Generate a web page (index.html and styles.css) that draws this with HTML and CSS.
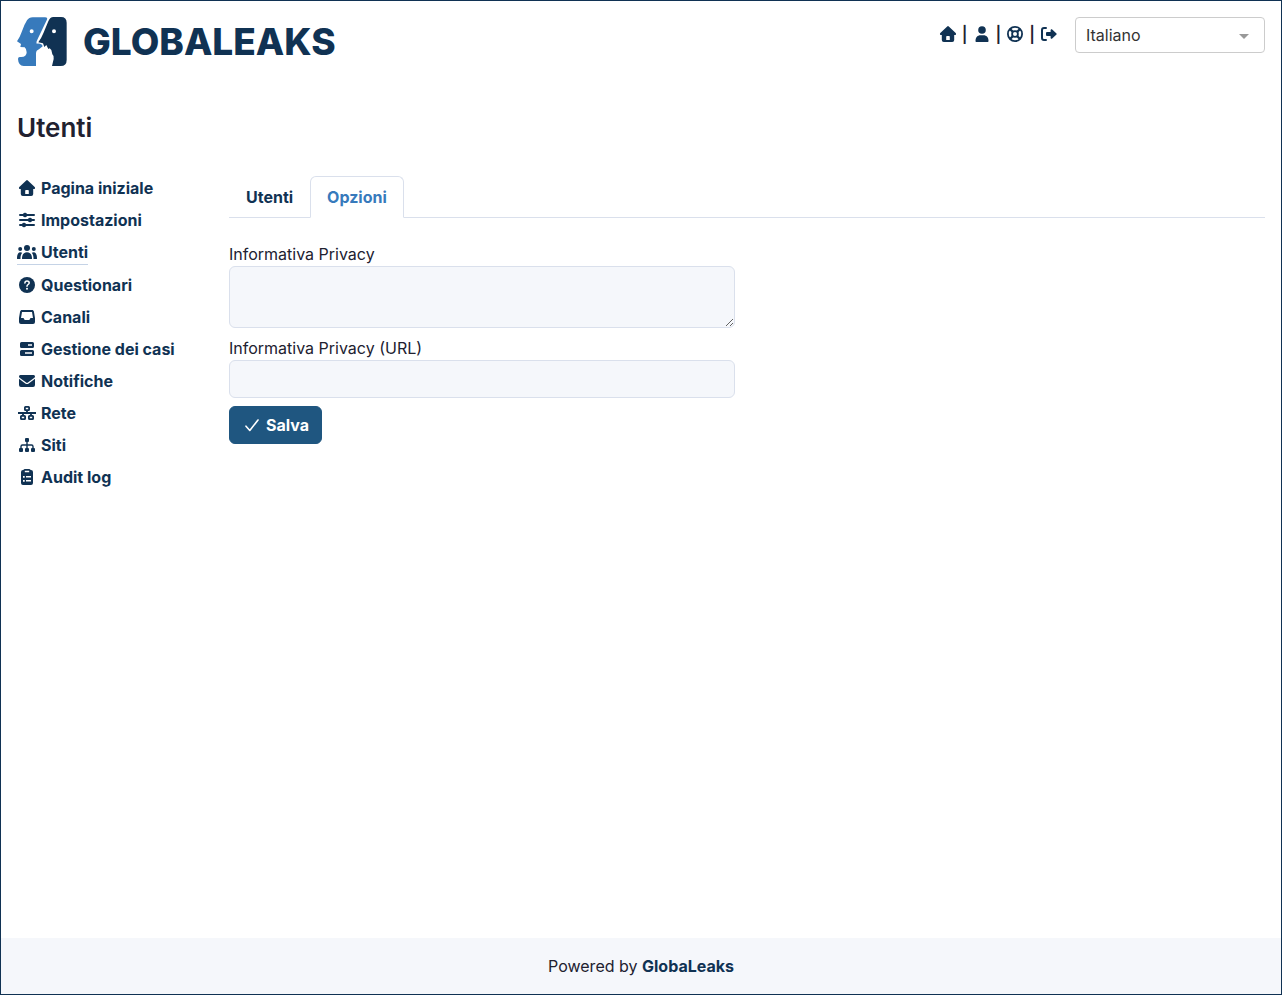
FILE: index.html
```html
<!DOCTYPE html>
<html lang="it">
<head>
    <meta charset="UTF-8">
    <meta name="viewport" content="width=device-width, initial-scale=1.0">
    <title>GlobaLeaks - Utenti</title>
    <link rel="stylesheet" href="styles.css">
</head>
<body>

    <!-- icons -->
    <svg class="sprite" aria-hidden="true">
        <symbol id="i-home" viewBox="0 0 20 16"><path fill-rule="evenodd" d="M9.200.400a1.200 1.200 0 0 1 1.600 0l6.900 6.700c.7.700.3 1.900-.7 1.900h-.8V14a2 2 0 0 1-2 2H5.800a2 2 0 0 1-2-2V9H3c-1 0-1.400-1.200-.7-1.900zM9 10a.8.8 0 0 0-.8.8V14h3.600v-3.200a.8.8 0 0 0-.8-.8z"/></symbol>
        <symbol id="i-sliders" viewBox="0 0 20 16"><path d="M3 2h3a2.200 2.200 0 0 1 4 0h7a1 1 0 0 1 0 2h-7a2.200 2.200 0 0 1-4 0H3a1 1 0 0 1 0-2zM3 7h8a2.200 2.200 0 0 1 4 0h2a1 1 0 0 1 0 2h-2a2.200 2.200 0 0 1-4 0H3a1 1 0 0 1 0-2zM3 12h2a2.200 2.200 0 0 1 4 0h8a1 1 0 0 1 0 2H9a2.200 2.200 0 0 1-4 0H3a1 1 0 0 1 0-2z"/></symbol>
        <symbol id="i-users" viewBox="0 0 20 16"><circle cx="10" cy="4" r="3"/><circle cx="3.200" cy="5" r="2"/><circle cx="16.800" cy="5" r="2"/><path d="M5 14.500C5 10.500 7 8.300 10 8.300s5 2.200 5 6.200c0 .4-.2.5-.5.5h-9c-.3 0-.5-.1-.5-.5zM0 14.500c0-4 1.200-6.300 3.200-6.300.8 0 1.500.2 2 .6C4 10.200 3.400 12 3.500 15h-3c-.3 0-.5-.1-.5-.5zM20 14.500c0-4-1.200-6.300-3.200-6.300-.8 0-1.500.2-2 .6 1.200 1.400 1.800 3.200 1.700 6.200h3c.3 0 .5-.1.5-.5z"/></symbol>
        <symbol id="i-question" viewBox="0 0 20 16"><circle cx="10" cy="8" r="8"/><path d="M7.900 6c.1-1.300.9-1.900 2.100-1.900s2.200.7 2.200 1.900c0 1.500-2.200 1.500-2.200 3.200" fill="none" stroke="#fff" stroke-width="1.500" stroke-linecap="round"/><circle cx="10" cy="11.700" r="1" fill="#fff"/></symbol>
        <symbol id="i-inbox" viewBox="0 0 20 16"><path fill-rule="evenodd" d="M5 1h10c1 0 1.700.6 1.900 1.500L18 9v4a2 2 0 0 1-2 2H4a2 2 0 0 1-2-2V9l1.100-6.500C3.300 1.600 4 1 5 1zm0 2L4 9h2.500l1.200 2h4.600l1.200-2H16l-1-6z"/></symbol>
        <symbol id="i-server" viewBox="0 0 20 16"><path fill-rule="evenodd" d="M4.500 1h11A1.500 1.500 0 0 1 17 2.500v3A1.500 1.500 0 0 1 15.500 7h-11A1.500 1.500 0 0 1 3 5.500v-3A1.500 1.500 0 0 1 4.500 1zM11 3.200v1.600h4V3.200zM4.500 9h11a1.500 1.500 0 0 1 1.500 1.500v3a1.500 1.500 0 0 1-1.500 1.500h-11A1.500 1.500 0 0 1 3 13.500v-3A1.500 1.500 0 0 1 4.500 9zM8 11.200v1.600h7v-1.600z"/></symbol>
        <symbol id="i-mail" viewBox="0 0 20 16"><path d="M3.500 2h13a1.500 1.500 0 0 1 .9 2.700l-6.500 4.900a1.500 1.500 0 0 1-1.800 0L2.600 4.700A1.500 1.500 0 0 1 3.500 2z"/><path d="M2 5.700l6.300 4.700a2.800 2.800 0 0 0 3.400 0L18 5.700V12a2 2 0 0 1-2 2H4a2 2 0 0 1-2-2z"/></symbol>
        <symbol id="i-network" viewBox="0 0 20 16"><g fill="none" stroke="currentColor" stroke-width="1.800"><rect x="7.900" y="1.900" width="4.200" height="3.200" rx=".6"/><rect x="3.900" y="10.900" width="4.200" height="3.200" rx=".6"/><rect x="11.900" y="10.900" width="4.200" height="3.200" rx=".6"/><path d="M1 8h18M10 5v3M6 8v3M14 8v3"/></g></symbol>
        <symbol id="i-sitemap" viewBox="0 0 20 16"><rect x="8" y="1" width="4" height="4" rx="1"/><rect x="2" y="11" width="4" height="4" rx="1"/><rect x="8" y="11" width="4" height="4" rx="1"/><rect x="14" y="11" width="4" height="4" rx="1"/><path d="M10 4v8M4 12V9.500Q4 8 5.500 8h9Q16 8 16 9.500V12" fill="none" stroke="currentColor" stroke-width="1.400"/></symbol>
        <symbol id="i-clipboard" viewBox="0 0 20 16"><path fill-rule="evenodd" d="M8 0h4c.7 0 1.300.4 1.700 1h.3a2 2 0 0 1 2 2v11a2 2 0 0 1-2 2H6a2 2 0 0 1-2-2V3a2 2 0 0 1 2-2h.3C6.700.4 7.300 0 8 0zm-.2 1.800v1.500h4.400V1.800zM6 7v1.700h1.700V7zm3 .1v1.500h5V7.100zM6 11v1.700h1.700V11zm3 .1v1.500h5v-1.500z"/></symbol>
        <symbol id="i-user" viewBox="0 0 20 16"><circle cx="10" cy="4" r="3.800"/><path d="M3.500 15c0-3.600 2-5.700 5-5.700h3c3 0 5 2.100 5 5.700 0 .6-.4 1-1 1h-11c-.6 0-1-.4-1-1z"/></symbol>
        <symbol id="i-ring" viewBox="0 0 20 16"><g fill="none" stroke="currentColor"><circle cx="10" cy="8" r="7.100" stroke-width="1.800"/><circle cx="10" cy="8" r="2.900" stroke-width="1.800"/><path d="M5 3l3 3M15 3l-3 3M5 13l3-3M15 13l-3-3" stroke-width="2.400"/></g></symbol>
        <symbol id="i-logout" viewBox="0 0 20 16"><path d="M7 2H5a2 2 0 0 0-2 2v8a2 2 0 0 0 2 2h2" fill="none" stroke="currentColor" stroke-width="2" stroke-linecap="round"/><path d="M12.200 3.300c.3-.1.700-.1 1 .2l4.300 3.900c.3.300.3.900 0 1.200l-4.300 3.900c-.6.600-1.600.2-1.600-.7V10H8a1 1 0 0 1-1-1V7a1 1 0 0 1 1-1h3.600V4.200c0-.4.200-.7.600-.9z"/></symbol>
        <symbol id="i-check" viewBox="0 0 16 16"><path d="M2 9.200L5.800 13.500 14 3" fill="none" stroke="currentColor" stroke-width="1.600" stroke-linecap="round" stroke-linejoin="round"/></symbol>
    </svg>

    <header class="header">
        <a class="logo" href="#" aria-label="GlobaLeaks">
            <svg class="logo-mark" viewBox="0 0 150 147" aria-hidden="true">
                <path fill="#377abc" fill-rule="evenodd" d="M47 1H84Q94 1 89 10L62 66Q57 75 59 80Q68 79 75 83L77 88L66 97Q57 100 57 110V147H20Q4 146 3 126Q3 119 10 120Q29 121 29 106Q29 96 23 91L10 90L12 81L0 73Q9 60 14 45Q22 22 30 10Q36 1 47 1zM44 37a6 6 0 1 0 0 12a6 6 0 1 0 0-12z"/>
                <path fill="#103253" fill-rule="evenodd" d="M109 0H132Q149 0 149 17V129Q149 147 131 147H105L110 126Q113 118 106 112L103 99L98 94L94 96L88 84L82 90L78 79L64 76Q73 64 79 49L94 13Q99 0 109 0zM111 37a6 6 0 1 0 0 12a6 6 0 1 0 0-12z"/>
            </svg>
            <span class="logo-text">GLOBALEAKS</span>
        </a>
        <div class="header-tools">
            <nav class="quick-links">
                <a href="#" aria-label="Pagina iniziale"><svg class="icon"><use href="#i-home"/></svg></a>
                <span>|</span>
                <a href="#" aria-label="Preferenze"><svg class="icon"><use href="#i-user"/></svg></a>
                <span>|</span>
                <a href="#" aria-label="Supporto"><svg class="icon"><use href="#i-ring"/></svg></a>
                <span>|</span>
                <a href="#" aria-label="Esci"><svg class="icon"><use href="#i-logout"/></svg></a>
            </nav>
            <div class="language">
                <select aria-label="Lingua">
                    <option>Italiano</option>
                </select>
            </div>
        </div>
    </header>

    <h1>Utenti</h1>

    <div class="content">
        <nav class="sidebar">
            <ul>
                <li><a href="#"><svg class="icon"><use href="#i-home"/></svg>Pagina iniziale</a></li>
                <li><a href="#"><svg class="icon"><use href="#i-sliders"/></svg>Impostazioni</a></li>
                <li><a class="active" href="#"><svg class="icon"><use href="#i-users"/></svg>Utenti</a></li>
                <li><a href="#"><svg class="icon"><use href="#i-question"/></svg>Questionari</a></li>
                <li><a href="#"><svg class="icon"><use href="#i-inbox"/></svg>Canali</a></li>
                <li><a href="#"><svg class="icon"><use href="#i-server"/></svg>Gestione dei casi</a></li>
                <li><a href="#"><svg class="icon"><use href="#i-mail"/></svg>Notifiche</a></li>
                <li><a href="#"><svg class="icon"><use href="#i-network"/></svg>Rete</a></li>
                <li><a href="#"><svg class="icon"><use href="#i-sitemap"/></svg>Siti</a></li>
                <li><a href="#"><svg class="icon"><use href="#i-clipboard"/></svg>Audit log</a></li>
            </ul>
        </nav>

        <main class="main">
            <div class="tabs">
                <a class="tab" href="#">Utenti</a>
                <a class="tab active" href="#">Opzioni</a>
            </div>

            <form class="options">
                <div class="form-group">
                    <label for="privacy">Informativa Privacy</label>
                    <textarea id="privacy" name="privacy" rows="2"></textarea>
                </div>
                <div class="form-group">
                    <label for="privacyUrl">Informativa Privacy (URL)</label>
                    <input type="text" id="privacyUrl" name="privacyUrl">
                </div>
                <button type="button"><svg class="icon"><use href="#i-check"/></svg>Salva</button>
            </form>
        </main>
    </div>

    <footer class="footer">
        Powered by <a href="#">GlobaLeaks</a>
    </footer>

</body>
</html>
```
FILE: styles.css
```css
* {
    box-sizing: border-box;
}
body {
    display: flex;
    flex-direction: column;
    min-height: 100vh;
    margin: 0;
    border: 1px solid #103253;
    background-color: #fff;
    color: #212130;
    font-family: Inter, sans-serif;
    font-size: 16px;
    line-height: 24px;
}
a {
    color: #103253;
    font-weight: 700;
    text-decoration: none;
}
.sprite {
    display: none;
}
.icon {
    width: 20px;
    height: 16px;
    flex: none;
    fill: currentColor;
}

/* header */
.header {
    display: flex;
    justify-content: space-between;
    align-items: flex-start;
    padding: 16px;
}
.logo {
    display: flex;
    align-items: center;
    gap: 16px;
}
.logo-mark {
    width: 50px;
    height: 49px;
}
.logo-text {
    font-size: 37px;
    font-weight: 800;
    line-height: 49px;
}
.header-tools {
    display: flex;
    gap: 16px;
}
.quick-links {
    display: flex;
    align-items: center;
    gap: 4px;
    height: 34px;
    font-weight: 600;
}
.quick-links a {
    display: flex;
}
.language {
    position: relative;
    width: 190px;
}
.language::after {
    content: "";
    position: absolute;
    top: 17px;
    right: 16px;
    border: 5px solid transparent;
    border-top-color: #999;
    border-bottom: 0;
    pointer-events: none;
}
.language select {
    width: 100%;
    height: 36px;
    padding: 0 10px;
    border: 1px solid #ccc;
    border-radius: 4px;
    background-color: #fff;
    color: #333;
    font: inherit;
    appearance: none;
}

h1 {
    margin: 29px 16px 31px;
    font-size: 26px;
    font-weight: 600;
    line-height: 34px;
}

/* page content */
.content {
    display: grid;
    grid-template-columns: repeat(12, 1fr);
    column-gap: 24px;
    flex: 1;
    align-items: start;
    padding: 0 16px;
}
.sidebar {
    grid-column: span 2;
}
.sidebar ul {
    display: flex;
    flex-direction: column;
    align-items: flex-start;
    gap: 8px;
    margin: 0;
    padding: 0;
    list-style: none;
}
.sidebar a {
    display: flex;
    align-items: center;
    gap: 4px;
    white-space: nowrap;
}
.sidebar .active {
    border-bottom: 1px solid #c5d3e6;
}
.main {
    grid-column: span 10;
}
.tabs {
    display: flex;
    border-bottom: 1px solid #dae0ec;
}
.tab {
    margin-bottom: -1px;
    padding: 8px 16px;
    border: 1px solid transparent;
    border-radius: 6px 6px 0 0;
}
.tab.active {
    border-color: #dae0ec #dae0ec #fff;
    background-color: #fff;
    color: #377abc;
}

/* form */
.options {
    width: calc(50% - 12px);
    padding-top: 24px;
}
.form-group {
    margin-bottom: 8px;
}
label {
    display: block;
}
input, textarea {
    display: block;
    width: 100%;
    padding: 6px 12px;
    border: 1px solid #dae0ec;
    border-radius: 6px;
    background-color: #f5f7fb;
    color: #212130;
    font: inherit;
}
textarea {
    resize: vertical;
}
button {
    display: flex;
    align-items: center;
    gap: 4px;
    padding: 6px 12px;
    border: 1px solid #1f5680;
    border-radius: 6px;
    background-color: #1f5680;
    color: #fff;
    font: inherit;
    font-weight: 700;
    cursor: pointer;
}

.footer {
    padding: 16px;
    background-color: #f5f7fb;
    text-align: center;
}
```
